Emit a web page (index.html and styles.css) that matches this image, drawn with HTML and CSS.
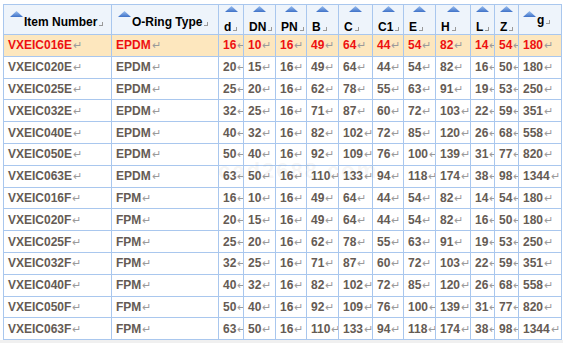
FILE: index.html
```html
<!DOCTYPE html>
<html>
<head>
    <title>Valve Dimensions</title>
    <link rel="stylesheet" href="styles.css">
</head>
<body>
    <div class="sheet">
        <table class="spec">
            <colgroup>
                <col style="width:108px"><col style="width:107px"><col style="width:25px"><col style="width:32px">
                <col style="width:31px"><col style="width:32px"><col style="width:34px"><col style="width:31px">
                <col style="width:32px"><col style="width:35px"><col style="width:24px"><col style="width:24px">
                <col style="width:43px">
            </colgroup>
            <thead id="head"></thead>
            <tbody id="rows"></tbody>
        </table>
        <div class="watermark">cad2688.com</div>
    </div>

    <script>
        const tri = '<svg class="tri" width="13" height="6" viewBox="0 0 13 6"><defs><linearGradient id="g" x1="0" y1="0" x2="0" y2="1"><stop offset="0" stop-color="#9cc0f0"/><stop offset="1" stop-color="#3f72c8"/></linearGradient></defs><polygon points="6.5,0 13,6 0,6" fill="url(#g)"/></svg>';

        const heads = [
            ['Item Number', 'wide'], ['O-Ring Type', 'wide'], ['d'], ['DN'], ['PN'], ['B'], ['C'],
            ['C1'], ['E'], ['H'], ['L'], ['Z'], ['g', 'wide g']
        ];

        const data = [
            ['016', 16, 10, 16, 49, 64, 44, 54, 82, 14, 54, 180],
            ['020', 20, 15, 16, 49, 64, 44, 54, 82, 16, 50, 180],
            ['025', 25, 20, 16, 62, 78, 55, 63, 91, 19, 53, 250],
            ['032', 32, 25, 16, 71, 87, 60, 72, 103, 22, 59, 351],
            ['040', 40, 32, 16, 82, 102, 72, 85, 120, 26, 68, 558],
            ['050', 50, 40, 16, 92, 109, 76, 100, 139, 31, 77, 820],
            ['063', 63, 50, 16, 110, 133, 94, 118, 174, 38, 98, 1344]
        ];

        let h = '<tr>';
        heads.forEach(([label, kind]) => {
            const cls = kind ? kind : 'narrow';
            h += `<th class="${cls}"><span class="icon">${tri}</span><span class="lbl">${label}<i class="mark"></i></span></th>`;
        });
        document.getElementById('head').innerHTML = h + '</tr>';

        let rows = '';
        [['E', 'EPDM'], ['F', 'FPM']].forEach(([suffix, ring]) => {
            data.forEach((r, i) => {
                const hot = suffix === 'E' && i === 0 ? ' class="hot"' : '';
                const cells = [`VXEIC${r[0]}${suffix}`, ring].concat(r.slice(1));
                rows += `<tr${hot}>` + cells.map(c => `<td>${c}<span class="ret">&#8629;</span></td>`).join('') + '</tr>';
            });
        });
        document.getElementById('rows').innerHTML = rows;
    </script>
</body>
</html>
```

FILE: styles.css
```css
html, body {
    margin: 0;
    background: #ffffff;
}
body {
    height: 343px;
    overflow: hidden;
    font-family: "Liberation Sans", Arial, sans-serif;
    background: linear-gradient(to bottom, #ffffff 340px, #f0f0f0 340px);
}
.sheet {
    position: relative;
    padding: 4px 0 0 3px;
}
.spec {
    border-collapse: collapse;
    table-layout: fixed;
    width: 559px;
    background: #ffffff;
}
.spec th,
.spec td {
    border: 1px solid #a9c7ee;
    overflow: hidden;
    white-space: nowrap;
    padding: 0;
    text-align: left;
}
.spec th {
    height: 29px;
    background: #eef4fb;
    color: #000000;
    font-size: 12px;
    font-weight: bold;
    vertical-align: top;
}
.spec th.narrow .icon {
    display: block;
    text-align: center;
    height: 8px;
    padding-top: 1px;
    line-height: 0;
}
.spec th.narrow .lbl {
    display: block;
    padding-left: 5px;
    margin-top: 6px;
}
.spec th.wide .icon {
    display: inline-block;
    vertical-align: top;
    margin: 6px 1px 0 6px;
    line-height: 0;
}
.spec th.wide .lbl {
    display: inline-block;
    margin-top: 10px;
}
.spec th.g .icon {
    margin-left: 4px;
}
.spec th.g .lbl {
    margin-top: 8px;
}
.mark {
    display: inline-block;
    width: 3px;
    height: 3px;
    margin-left: 2px;
    border-right: 1px solid #999999;
    border-bottom: 1px solid #999999;
}
.spec td {
    height: 20.8px;
    font-size: 12px;
    font-weight: bold;
    color: #655b54;
    padding-left: 4px;
}
.spec tr.hot td {
    background: #fde7be;
    color: #ee1111;
}
.ret {
    color: #9a9a9a;
    font-weight: normal;
    font-size: 11px;
    margin-left: 1px;
}
.watermark {
    position: absolute;
    left: 218px;
    top: 158px;
    font-size: 22px;
    font-weight: bold;
    letter-spacing: 2px;
    color: rgba(120, 120, 120, 0.08);
    pointer-events: none;
}
```
